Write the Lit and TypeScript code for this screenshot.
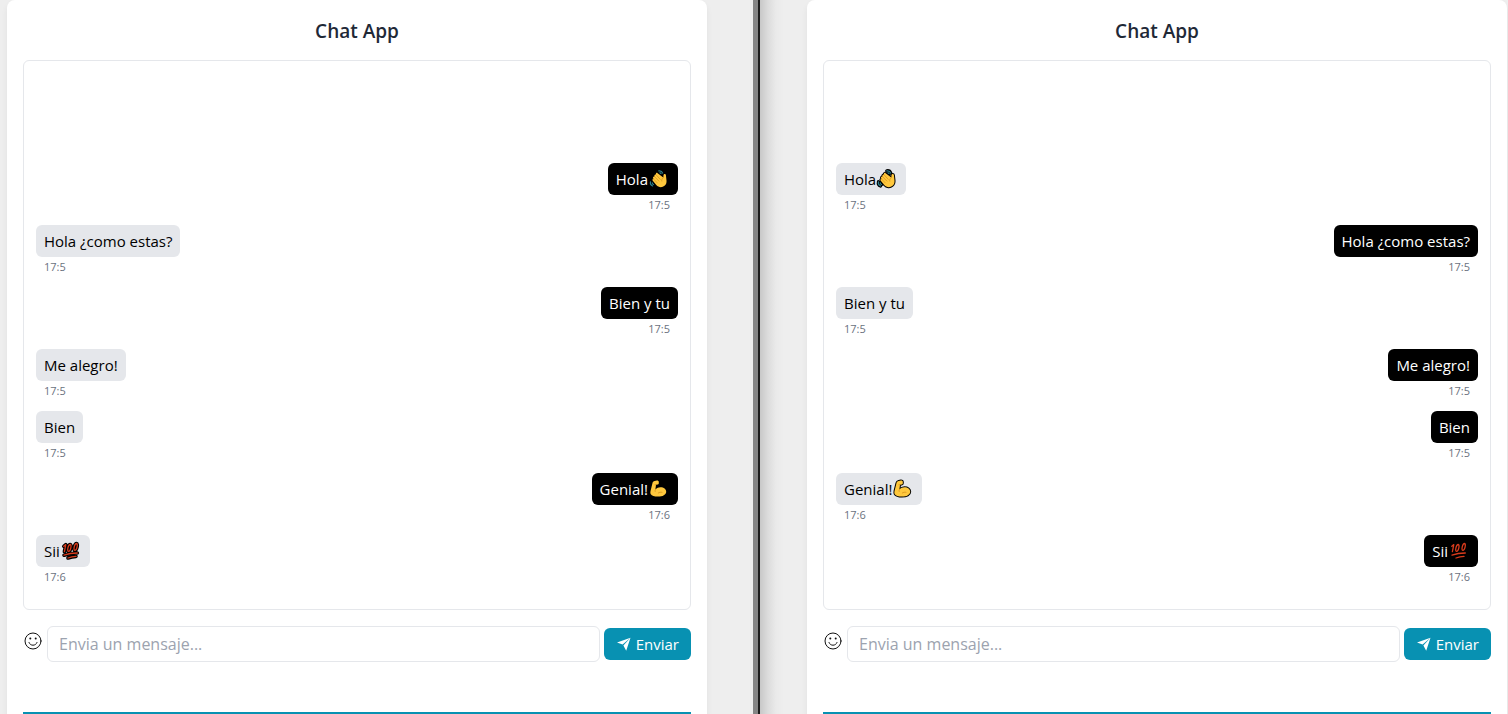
import { LitElement, html, svg, css, nothing } from "lit";
import { customElement, property } from "lit/decorators.js";
import { classMap } from "lit/directives/class-map.js";

type Emoji = "wave" | "arm" | "hundred";
interface Message {
  author: "ana" | "luis";
  text: string;
  emoji?: Emoji;
  time: string;
}

const MESSAGES: Message[] = [
  { author: "ana", text: "Hola", emoji: "wave", time: "17:5" },
  { author: "luis", text: "Hola ¿como estas?", time: "17:5" },
  { author: "ana", text: "Bien y tu", time: "17:5" },
  { author: "luis", text: "Me alegro!", time: "17:5" },
  { author: "luis", text: "Bien", time: "17:5" },
  { author: "ana", text: "Genial!", emoji: "arm", time: "17:6" },
  { author: "luis", text: "Sii", emoji: "hundred", time: "17:6" },
];

const WAVE_LINES =
  "M9.800 1.900c1.800-.3 3.300.6 3.900 2.200M10.800 3.900c.6 0 1.100.3 1.300.8M1.500 12.800c-.4 1.900.3 3.500 2.100 4.200M3.400 13.800c0 .8.4 1.400 1.100 1.700";
const HUNDRED_LINES =
  "M2.800 5.300l2-1.700-1.400 7M9.200 3.500c-2 0-3.500 6.700-1.700 6.900 1.900.2 3.600-6.700 1.700-6.900zM15.500 2.500c-2 0-3.500 6.700-1.700 6.900 1.900.2 3.600-6.700 1.700-6.900zM3 14.200c4-1.500 8.500-2.200 13.300-2.200M7 17c2.600-1 5.200-1.500 8-1.600";

const EMOJI = {
  wave: svg`
    <path d=${WAVE_LINES} fill="none" stroke="#000" stroke-width="3.400" stroke-linecap="round"/>
    <path d=${WAVE_LINES} fill="none" stroke="#2b7f8c" stroke-width="1.200" stroke-linecap="round"/>
    <path fill="#ffc83d" stroke="#000" stroke-width="2" paint-order="stroke" stroke-linejoin="round"
      d="M8.600 4.200c-.8-.8-2 0-1.600 1l-.1.400c-1-.3-1.900.6-1.300 1.600l-.2.400c-1-.2-1.800.8-1.200 1.700l.2.600c-.9 0-1.400.9-.8 1.700l3.700 4.500c2.100 2.500 5.900 2.800 8.200.7 1.700-1.500 2.200-3.400 2-5.400l-.6-5.400c-.2-1.500-2.200-1.500-2.400 0l-.2 2.600z"/>
    <path fill="none" stroke="#c98a18" stroke-width=".6" stroke-linecap="round"
      d="M7 5.700l4.200 4.600M5.500 7.600l4.400 4.500M4.400 9.900l3.900 4M14.500 8.600c-1.500.8-2.100 2-1.700 3.500"/>`,
  arm: svg`
    <path fill="#ffc83d" stroke="#000" stroke-width="2" paint-order="stroke" stroke-linejoin="round"
      d="M5.600 1.900l2.300-.3c1-.1 1.900.5 1.900 1.400v1.200c0 .7-.5 1.200-1.200 1.300l-1.600.2-.6 4.900c1.500-1.500 3-2.300 5-2.300 3.500 0 5.800 1.900 5.800 4.400 0 3-3.500 4.900-8.200 4.900-3.800 0-6.200-1-7.200-2.400-.6-.9-.5-2.100-.2-3.500l1.900-7.700c.3-1.300.9-1.900 2.100-2.100z"/>
    <path fill="none" stroke="#d18b18" stroke-width=".7" stroke-linecap="round"
      d="M7 5.700l-1.100.1M6.400 10.600c-.4.700-.4 1.300-.2 1.900M9.300 14c1-.8 2.400-1 3.700-.7"/>`,
  hundred: svg`
    <path d=${HUNDRED_LINES} fill="none" stroke="#000" stroke-width="3.600" stroke-linecap="round" stroke-linejoin="round"/>
    <path d=${HUNDRED_LINES} fill="none" stroke="#d83b1c" stroke-width="1.300" stroke-linecap="round" stroke-linejoin="round"/>`,
};

const EMOJI_LABEL = { wave: "saludo", arm: "fuerza", hundred: "cien" };

@customElement("chat-message")
class ChatMessage extends LitElement {
  @property({ attribute: false }) message!: Message;
  @property({ type: Boolean }) own = false;

  static styles = css`
    :host {
      display: block;
    }
    .message {
      display: flex;
      flex-direction: column;
      align-items: flex-start;
      margin-bottom: 10px;
    }
    .own {
      align-items: flex-end;
    }
    .bubble {
      display: flex;
      align-items: center;
      height: 32px;
      padding: 0 8px;
      border-radius: 6px;
      background: #e5e7eb;
      color: #000;
      font-size: 15px;
      line-height: 24px;
    }
    .own .bubble {
      background: #000;
      color: #fff;
    }
    .emoji {
      width: 22px;
      height: 20px;
      overflow: visible;
    }
    .time {
      padding: 0 8px;
      font-size: 11px;
      line-height: 20px;
      color: #6b7280;
    }
  `;

  render() {
    const { text, emoji, time } = this.message;
    return html`
      <div class=${classMap({ message: true, own: this.own })}>
        <div class="bubble">
          <span>${text}</span>
          ${emoji
            ? html`<svg class="emoji" viewBox="0 0 20 20" role="img" aria-label=${EMOJI_LABEL[emoji]}>${EMOJI[emoji]}</svg>`
            : nothing}
        </div>
        <time class="time">${time}</time>
      </div>
    `;
  }
}

@customElement("chat-card")
class ChatCard extends LitElement {
  @property() user = "ana";

  static styles = css`
    :host {
      display: block;
    }
    .card {
      box-sizing: border-box;
      display: flex;
      flex-direction: column;
      min-height: 100vh;
      padding: 16px 16px 0;
      border-radius: 8px 8px 0 0;
      background: #fff;
      box-shadow: 0 4px 6px rgba(0, 0, 0, 0.06);
    }
    .title {
      margin: 0 0 14px;
      font-size: 19px;
      line-height: 30px;
      font-weight: 600;
      text-align: center;
      color: #1f2937;
    }
    .log {
      flex: 1;
      display: flex;
      flex-direction: column;
      justify-content: flex-end;
      padding: 12px;
      border: 1px solid #e5e7eb;
      border-radius: 6px;
    }
    .composer {
      display: flex;
      align-items: center;
      gap: 4px;
      margin: 16px 0 50px;
    }
    .picker {
      display: flex;
      width: 20px;
      height: 24px;
      margin-bottom: 6px;
      padding: 0;
      align-items: center;
      justify-content: center;
      border: 0;
      background: none;
      color: #111;
    }
    .field {
      box-sizing: border-box;
      flex: 1;
      min-width: 0;
      height: 36px;
      padding: 0 11px;
      border: 1px solid #e5e7eb;
      border-radius: 6px;
      background: #fff;
      font: inherit;
      font-size: 16px;
      color: #111827;
    }
    .field::placeholder {
      color: #9ca3af;
      opacity: 1;
    }
    .send {
      display: flex;
      align-items: center;
      gap: 4px;
      height: 32px;
      padding: 0 12px;
      border: 0;
      border-radius: 6px;
      background: #0891b2;
      color: #fff;
      font: inherit;
      font-size: 15px;
    }
    .footer {
      height: 2px;
      background: #0891b2;
    }
  `;

  render() {
    return html`
      <section class="card">
        <h1 class="title">Chat App</h1>
        <div class="log" role="log">
          ${MESSAGES.map(
            (m) => html`<chat-message .message=${m} ?own=${m.author === this.user}></chat-message>`
          )}
        </div>
        <form class="composer" @submit=${(e: Event) => e.preventDefault()}>
          <button class="picker" type="button" aria-label="Emojis">
            <svg width="18" height="18" viewBox="0 0 18 18" fill="none" stroke="currentColor" stroke-width="1" stroke-linecap="round">
              <circle cx="9" cy="9" r="8" />
              <path d="M5 10.500c.7 1.700 2.200 2.700 4 2.700s3.300-1 4-2.700" />
              <circle cx="6.300" cy="6.600" r="1" fill="currentColor" stroke="none" />
              <circle cx="11.700" cy="6.600" r="1" fill="currentColor" stroke="none" />
            </svg>
          </button>
          <input class="field" type="text" aria-label="Mensaje" placeholder="Envia un mensaje..." />
          <button class="send" type="submit">
            <svg width="16" height="16" viewBox="0 0 16 16" fill="currentColor">
              <path d="M14.500 1.800L1 6.600l5.600 2zM14.500 1.800L7.400 9.400l2.800 5.400z" />
            </svg>
            <span>Enviar</span>
          </button>
        </form>
        <div class="footer"></div>
      </section>
    `;
  }
}

@customElement("app-root")
class AppRoot extends LitElement {
  static styles = css`
    :host {
      display: block;
      font-family: "Open Sans", "Noto Sans", sans-serif;
    }
    .desktop {
      display: grid;
      grid-template-columns: 753fr 7px 748fr;
      min-height: 100vh;
      background: #eee;
    }
    .left {
      padding: 0 46px 0 7px;
    }
    .divider {
      background: #858585;
      border-right: 2px solid #1c1c1c;
    }
    .right {
      padding: 0 1px 0 47px;
      background: linear-gradient(to right, #c8c8c8, #dcdcdc 8px, #eaeaea 16px, #eee 24px);
    }
  `;

  render() {
    return html`
      <main class="desktop">
        <div class="left"><chat-card user="ana"></chat-card></div>
        <div class="divider"></div>
        <div class="right"><chat-card user="luis"></chat-card></div>
      </main>
    `;
  }
}
